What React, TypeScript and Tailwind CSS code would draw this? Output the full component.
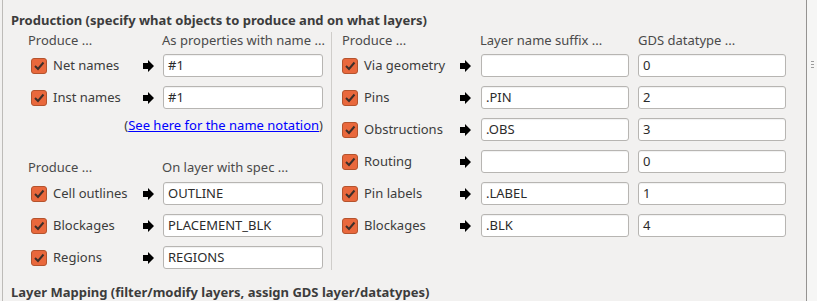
const leftTop = [
  { label: "Net names", value: "#1" },
  { label: "Inst names", value: "#1" },
];

const leftBottom = [
  { label: "Cell outlines", value: "OUTLINE" },
  { label: "Blockages", value: "PLACEMENT_BLK" },
  { label: "Regions", value: "REGIONS" },
];

const rightRows = [
  { label: "Via geometry", suffix: "", datatype: "0" },
  { label: "Pins", suffix: ".PIN", datatype: "2" },
  { label: "Obstructions", suffix: ".OBS", datatype: "3" },
  { label: "Routing", suffix: "", datatype: "0" },
  { label: "Pin labels", suffix: ".LABEL", datatype: "1" },
  { label: "Blockages", suffix: ".BLK", datatype: "4" },
];

function CheckBox() {
  return (
    <div className="flex h-[16px] w-[16px] flex-shrink-0 items-center justify-center rounded-[3px] border border-[#b4532d] bg-[#e9683c]">
      <svg width="12" height="12" viewBox="0 0 12 12">
        <path d="M2 6 L5 9 L10.5 2.5" fill="none" stroke="#3d2f2a" strokeWidth="2" />
      </svg>
    </div>
  );
}

function Arrow() {
  return (
    <svg viewBox="0 0 11 12" className="h-[12px] w-[11px] flex-shrink-0">
      <path d="M0 3 H5 V0 L11 6 L5 12 V9 H0 Z" fill="#000" />
    </svg>
  );
}

function Field({ value, width }: { value: string; width: string }) {
  return (
    <div
      className={`flex h-[23px] ${width} items-center rounded-[3px] border border-[#b7b5b2] bg-white px-[4px] text-[13px] text-[#2b2b2b] shadow-[inset_0_1px_1px_rgba(0,0,0,0.06)]`}
    >
      {value}
    </div>
  );
}

export default function App() {
  return (
    <div className="flex h-[301px] w-[817px] overflow-hidden bg-[#f2f1f0] font-['Noto_Sans',sans-serif] text-[13px] text-[#3c3c3c]">
      <div className="ml-[2px] flex w-[805px] flex-col border-l border-r border-l-[#bdbbb8] border-r-[#959391] pl-[8px]">
        <div className="mt-[12px] h-[17px] whitespace-nowrap font-bold leading-[17px]">
          Production (specify what objects to produce and on what layers)
        </div>

        <div className="mt-[2px] flex h-[253px] pl-[17px]">
          {/* left column */}
          <div className="flex w-[295px] flex-shrink-0 flex-col">
            <div className="flex h-[18px] items-center whitespace-nowrap leading-[18px] text-[#4a4a4a]">
              <span className="w-[134px] flex-shrink-0">Produce ...</span>
              <span>As properties with name ...</span>
            </div>
            {leftTop.map((r) => (
              <div key={r.label} className="flex h-[32px] items-center pl-[3px] pt-[1px]">
                <CheckBox />
                <span className="ml-[6px] w-[90px] whitespace-nowrap">{r.label}</span>
                <Arrow />
                <div className="ml-[9px]">
                  <Field value={r.value} width="w-[160px]" />
                </div>
              </div>
            ))}
            <div className="flex h-[25px] items-center justify-end whitespace-nowrap">
              (
              <span className="text-[#0000ff] underline">See here for the name notation</span>)
            </div>
            <div className="mt-[20px] flex h-[18px] items-center whitespace-nowrap leading-[18px] text-[#4a4a4a]">
              <span className="w-[134px] flex-shrink-0">Produce ...</span>
              <span>On layer with spec ...</span>
            </div>
            <div className="mt-[1px] flex flex-col">
              {leftBottom.map((r) => (
                <div key={r.label} className="flex h-[32px] items-center pl-[3px] pt-[1px]">
                  <CheckBox />
                  <span className="ml-[6px] w-[90px] whitespace-nowrap">{r.label}</span>
                  <Arrow />
                  <div className="ml-[9px]">
                    <Field value={r.value} width="w-[160px]" />
                  </div>
                </div>
              ))}
            </div>
          </div>

          {/* separator */}
          <div className="ml-[8px] mt-[1px] h-[238px] w-px flex-shrink-0 bg-[#cfcdca]" />

          {/* right column */}
          <div className="ml-[10px] flex flex-col">
            <div className="flex h-[18px] items-center whitespace-nowrap leading-[18px] text-[#4a4a4a]">
              <span className="w-[138px] flex-shrink-0">Produce ...</span>
              <span className="w-[158px] flex-shrink-0">Layer name suffix ...</span>
              <span>GDS datatype ...</span>
            </div>
            {rightRows.map((r) => (
              <div key={r.label} className="flex h-[32px] items-center pt-[1px]">
                <CheckBox />
                <span className="ml-[6px] w-[96px] whitespace-nowrap">{r.label}</span>
                <Arrow />
                <div className="ml-[10px]">
                  <Field value={r.suffix} width="w-[148px]" />
                </div>
                <div className="ml-[9px]">
                  <Field value={r.datatype} width="w-[148px]" />
                </div>
              </div>
            ))}
          </div>
        </div>

        <div className="h-[17px] whitespace-nowrap font-bold leading-[17px]">
          Layer Mapping (filter/modify layers, assign GDS layer/datatypes)
        </div>
      </div>

      {/* splitter strip */}
      <div className="flex w-[10px] flex-col gap-[2px] bg-[#f6f6f5] pl-[4px] pt-[61px]">
        <div className="h-px w-[3px] bg-[#9c9c9c]" />
        <div className="h-px w-[3px] bg-[#9c9c9c]" />
        <div className="h-px w-[3px] bg-[#9c9c9c]" />
      </div>
    </div>
  );
}
